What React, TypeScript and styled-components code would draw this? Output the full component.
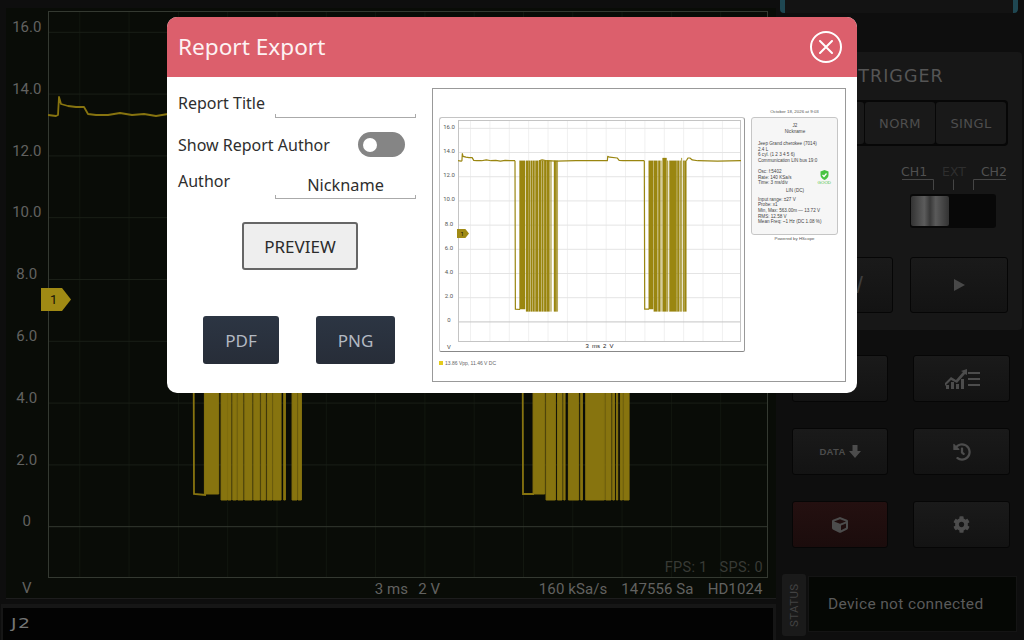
import React from "react";
import styled, { createGlobalStyle } from "styled-components";
import { FaCube, FaHistory, FaCog } from "react-icons/fa";

const GlobalStyle = createGlobalStyle`
  html, body { margin: 0; padding: 0; background: #0d0d0d; }
  * { box-sizing: border-box; }
`;

const UI_FONT = `"Noto Sans", "Open Sans", sans-serif`;
const SCOPE_FONT = `Roboto, "Liberation Sans", sans-serif`;
const TECH_FONT = `"DejaVu Sans", "Liberation Sans", sans-serif`;
const TINY_FONT = `"Liberation Sans", sans-serif`;

const Page = styled.div`
  position: relative;
  width: 1024px;
  height: 640px;
  overflow: hidden;
  display: grid;
  grid-template-columns: 777px 247px;
  background: #0e0e0e;
`;
const LeftColumn = styled.div`
  display: flex;
  flex-direction: column;
  padding: 8px 1px 0 6px;
`;
const ScopePanel = styled.div`
  position: relative;
  height: 591px;
  padding-top: 3px;
  background: #090c07;
  border-bottom: 1px solid #1d1d1d;
  display: grid;
  grid-template-columns: 41.5px 720px;
  grid-template-rows: 567px 1fr;
`;
const YAxis = styled.div<{ $pad: number; $gap: number; $line: number; $size: number; $color: string }>`
  display: flex;
  flex-direction: column;
  align-items: center;
  padding-top: ${(p) => p.$pad}px;
  gap: ${(p) => p.$gap}px;
  font-family: ${SCOPE_FONT};
  font-size: ${(p) => p.$size}px;
  line-height: ${(p) => p.$line}px;
  color: ${(p) => p.$color};
`;
const AxisUnit = styled.div<{ $size: number; $color: string }>`
  text-align: center;
  align-self: center;
  font-family: ${SCOPE_FONT};
  font-size: ${(p) => p.$size}px;
  color: ${(p) => p.$color};
`;
const ScopeFooter = styled.div`
  display: grid;
  grid-template-columns: 1fr auto 1fr;
  align-items: center;
  padding: 1px 5px 0 0;
  font-family: ${SCOPE_FONT};
  font-size: 15px;
  color: #626260;
  letter-spacing: 0.1px;
`;
const FooterCenter = styled.div`
  grid-column: 2;
  display: flex;
  gap: 10px;
  margin-left: 5px;
`;
const FooterRight = styled.div`
  display: flex;
  justify-content: flex-end;
  gap: 14px;
`;
const FpsOverlay = styled.div`
  position: absolute;
  right: 13px;
  top: 551px;
  display: flex;
  gap: 12px;
  font-family: ${SCOPE_FONT};
  font-size: 14.5px;
  color: #383a35;
  letter-spacing: 0.3px;
`;
const Marker = styled.div<{ $w: number; $h: number; $size: number }>`
  position: absolute;
  width: ${(p) => p.$w}px;
  height: ${(p) => p.$h}px;
  background: #a08a14;
  clip-path: polygon(0 0, 70% 0, 100% 50%, 70% 100%, 0 100%);
  font-family: ${SCOPE_FONT};
  font-size: ${(p) => p.$size}px;
  line-height: ${(p) => p.$h}px;
  padding-left: ${(p) => p.$w * 0.3}px;
  color: #14120a;
`;
const MainMarker = styled(Marker)`
  left: 35px;
  top: 280px;
`;
const PreviewMarker = styled(Marker)`
  left: 17px;
  top: 111px;
`;
const NameBar = styled.div`
  margin-top: 5px;
  margin-left: -5px;
  height: 36px;
  background: #161616;
  padding: 4px 3px 0 2px;
`;
const NameField = styled.div`
  height: 32px;
  background: #030303;
  padding-left: 8px;
  font-family: ${TECH_FONT};
  font-size: 14px;
  line-height: 30px;
  letter-spacing: 1px;
  color: #757575;
`;
const NameText = styled.span`
  display: inline-block;
  transform: scaleX(1.35);
  transform-origin: left center;
`;

const RightColumn = styled.div`
  display: flex;
  flex-direction: column;
`;
const TopStrip = styled.div`
  height: 13px;
  margin: 0 6px 0 3px;
  padding: 0 5px;
  background: #1f4752;
  border-radius: 0 0 4px 4px;
`;
const TopStripInner = styled.div`
  height: 100%;
  background: #131313;
`;
const TriggerPanel = styled.div`
  margin: 39px 2px 0 0;
  height: 278px;
  padding: 0 14px 0 17px;
  background: #171717;
  border-radius: 4px;
  display: flex;
  flex-direction: column;
`;
const TriggerTitle = styled.div`
  height: 48px;
  text-align: center;
  font-family: ${TECH_FONT};
  font-size: 17.5px;
  line-height: 48px;
  letter-spacing: 1px;
  color: #555;
`;
const ModeGroup = styled.div`
  display: grid;
  grid-template-columns: repeat(3, 71px);
  height: 46px;
  background: #070707;
  border-radius: 4px;
  padding: 2px 0;
`;
const ModeButton = styled.div`
  display: flex;
  align-items: center;
  justify-content: center;
  margin-right: 1px;
  background: #191919;
  border-radius: 3px;
  font-family: ${TECH_FONT};
  font-size: 13px;
  letter-spacing: 0.4px;
  color: #4e4e4e;
`;
const SwitchBlock = styled.div`
  align-self: flex-end;
  width: 107px;
  margin-top: 18px;
  display: flex;
  flex-direction: column;
`;
const ChannelLabels = styled.div`
  display: flex;
  justify-content: space-between;
  padding-right: 1px;
  height: 15px;
  font-family: ${TECH_FONT};
  font-size: 12.5px;
  line-height: 15px;
`;
const ChannelLabel = styled.span<{ $dim?: boolean }>`
  color: ${(p) => (p.$dim ? "#2e2e2e" : "#505050")};
`;
const Trough = styled.div`
  width: 86px;
  height: 34px;
  margin: 4px 0 0 9px;
  background: #080808;
  border-radius: 3px;
  padding: 2px 1px;
`;
const Thumb = styled.div`
  width: 38px;
  height: 30px;
  border-radius: 2px;
  background: linear-gradient(90deg, #333, #5c5c5c 35%, #383838 50%, #5a5a5a 65%, #333);
`;
const BigRow = styled.div`
  display: grid;
  grid-template-columns: 99px 98px;
  gap: 17px;
  margin-top: 29px;
`;
const BigButton = styled.div`
  height: 56px;
  display: flex;
  align-items: center;
  justify-content: center;
  background: linear-gradient(180deg, #1a1a1a, #131313);
  border: 1px solid #060606;
  border-radius: 3px;
`;
const SlashMark = styled.span`
  font-family: ${TINY_FONT};
  font-size: 24px;
  color: #3e3e3e;
  margin-left: 32px;
`;
const ActionGrid = styled.div`
  display: grid;
  grid-template-columns: 96px 97px;
  grid-auto-rows: 47px;
  column-gap: 25px;
  row-gap: 26px;
  margin: 25px 0 0 15px;
`;
const ActionButton = styled.div<{ $danger?: boolean }>`
  display: flex;
  align-items: center;
  justify-content: center;
  gap: 3px;
  background: ${(p) =>
    p.$danger ? "linear-gradient(180deg, #241010, #1b0c0c)" : "linear-gradient(180deg, #1a1a1a, #131313)"};
  border: 1px solid #060606;
  border-radius: 3px;
  color: #4c4c4c;
  font-family: ${TINY_FONT};
  font-weight: 700;
  font-size: 9.5px;
  letter-spacing: 0.3px;
`;
const StatusRow = styled.div`
  display: flex;
  gap: 2px;
  margin: 26px 0 0 5px;
`;
const StatusTag = styled.div`
  width: 24px;
  height: 62px;
  background: #1a1a1a;
  border-radius: 3px;
  display: flex;
  align-items: center;
  justify-content: center;
  writing-mode: vertical-rl;
  transform: rotate(180deg);
  font-family: ${SCOPE_FONT};
  font-size: 11.5px;
  letter-spacing: 0.4px;
  color: #424242;
`;
const StatusBox = styled.div`
  width: 209px;
  height: 56px;
  margin-top: 2px;
  background: #050704;
  border: 1px solid #141414;
  display: flex;
  align-items: center;
  padding-left: 19px;
  font-family: ${SCOPE_FONT};
  font-size: 15.5px;
  letter-spacing: 0.35px;
  color: #5a5a5a;
`;

/* Modal */
const Modal = styled.div`
  position: absolute;
  left: 167px;
  top: 17px;
  width: 690px;
  height: 376px;
  background: #fff;
  border-radius: 10px;
  overflow: hidden;
  display: flex;
  flex-direction: column;
  font-family: ${UI_FONT};
`;
const ModalHeader = styled.div`
  height: 60px;
  flex: none;
  background: #dc5f6c;
  display: flex;
  align-items: center;
  justify-content: space-between;
  padding: 0 15px 0 11px;
`;
const ModalTitle = styled.div`
  font-size: 22.6px;
  margin-top: -2px;
  color: #fdf2f3;
`;
const CloseButton = styled.div`
  width: 32px;
  height: 32px;
  border: 2px solid #fff;
  border-radius: 50%;
  display: flex;
  align-items: center;
  justify-content: center;
`;
const ModalBody = styled.div`
  flex: 1;
  display: grid;
  grid-template-columns: 265px 414px;
  padding-top: 11px;
`;
const Form = styled.div`
  display: flex;
  flex-direction: column;
  padding: 5px 0 0 11px;
`;
const FieldRow = styled.div<{ $h: number; $mt?: number }>`
  display: grid;
  grid-template-columns: 97px 141px;
  height: ${(p) => p.$h}px;
  margin-top: ${(p) => p.$mt ?? 0}px;
`;
const FieldLabel = styled.div`
  font-size: 16px;
  line-height: 20px;
  color: #2e2e2e;
  white-space: nowrap;
`;
const FieldInput = styled.div`
  position: relative;
  border-bottom: 1px solid #aaa;
  text-align: center;
  font-size: 16.3px;
  line-height: 20px;
  color: #2e2e2e;
  display: flex;
  align-items: flex-end;
  justify-content: center;
  padding-bottom: 3px;
  &::before,
  &::after {
    content: "";
    position: absolute;
    bottom: 0;
    width: 1px;
    height: 3px;
    background: #aaa;
  }
  &::before { left: 0; }
  &::after { right: 0; }
`;
const ToggleRow = styled.div`
  display: flex;
  align-items: center;
  justify-content: space-between;
  width: 227px;
  height: 25px;
  margin-top: 14px;
`;
const Toggle = styled.div`
  width: 47px;
  height: 25px;
  border-radius: 13px;
  background: #858585;
  display: flex;
  align-items: center;
  padding-left: 5px;
`;
const ToggleKnob = styled.div`
  width: 14px;
  height: 14px;
  border-radius: 50%;
  background: #fff;
`;
const PreviewButton = styled.div`
  width: 116px;
  height: 48px;
  margin: 23px 0 0 64px;
  background: #eeeeee;
  border: 2px solid #666;
  border-radius: 3px;
  display: flex;
  align-items: center;
  justify-content: center;
  font-size: 17px;
  color: #2b2b2b;
`;
const ExportRow = styled.div`
  display: flex;
  gap: 37px;
  margin: 46px 0 0 25px;
`;
const ExportButton = styled.div<{ $w: number }>`
  width: ${(p) => p.$w}px;
  height: 48px;
  background: linear-gradient(180deg, #2c3543, #272d38);
  border-radius: 3px;
  display: flex;
  align-items: center;
  justify-content: center;
  font-size: 17px;
  color: #b3b9c2;
`;

/* Preview */
const PreviewFrame = styled.div`
  height: 294px;
  border: 1.5px solid #999;
  border-right-width: 1px;
  display: grid;
  grid-template-columns: 306px 87px;
  column-gap: 6px;
  padding: 21px 0 0 6px;
  font-family: ${TINY_FONT};
`;
const PreviewLeft = styled.div`
  grid-row: 1;
  padding-top: 7px;
`;
const ChartCard = styled.div`
  position: relative;
  height: 235px;
  border: 1px solid #c4c4c4;
  border-right-color: #999;
  border-bottom: 1.5px solid #888;
  border-radius: 3px 3px 2px 2px;
  display: grid;
  grid-template-columns: 18px 283px;
  grid-template-rows: 222px 1fr;
  padding-top: 2px;
`;
const PreviewFooter = styled.div`
  text-align: center;
  font-size: 6px;
  color: #222;
  line-height: 9px;
  word-spacing: 1.5px;
`;
const Legend = styled.div`
  display: flex;
  align-items: center;
  gap: 2px;
  margin-top: 8px;
  font-size: 5px;
  color: #666;
`;
const LegendSwatch = styled.span`
  width: 4px;
  height: 4px;
  background: #e4cb1c;
`;
const PreviewSide = styled.div`
  display: flex;
  flex-direction: column;
  align-items: stretch;
  margin-top: -2px;
`;
const TinyCenter = styled.div`
  text-align: center;
  font-size: 4.4px;
  line-height: 7px;
  color: #555;
`;
const SideCard = styled.div`
  margin-top: 2px;
  height: 118px;
  background: #f6f6f6;
  border: 1px solid #c6c6c6;
  border-radius: 3px;
  padding: 5px 5px 0 6px;
  font-size: 4.6px;
  line-height: 5.7px;
  color: #444;
  white-space: nowrap;
`;
const SideHead = styled.div`
  text-align: center;
  margin-bottom: 6px;
  line-height: 6px;
`;
const SideBlock = styled.div<{ $mb: number }>`
  margin-bottom: ${(p) => p.$mb}px;
`;
const OscRow = styled.div`
  display: flex;
  justify-content: space-between;
  align-items: center;
  padding-right: 1px;
`;
const GoodBadge = styled.div`
  display: flex;
  flex-direction: column;
  align-items: center;
  color: #49c342;
  font-size: 4.4px;
  line-height: 5px;
`;
const SideTitle = styled.div`
  text-align: center;
  margin: 2px 0 3px;
`;

const px = (zoom: number, base: number) => base + zoom / 3 - 47.6;
const burstOne = [
  [612, 655], [662, 680], [682, 692], [697, 708], [712, 728], [733, 755], [760, 778],
  [782, 795], [800, 815], [818, 842], [850, 855], [875, 890], [893, 903],
].map(([a, b]) => [px(a, 0), px(b, 0)]);
const burstTwo = [
  [398, 433], [437, 465], [471, 485], [490, 494], [504, 535], [541, 546], [556, 612],
  [616, 632], [637, 642], [648, 652], [660, 666], [670, 686],
].map(([a, b]) => [px(a, 400), px(b, 400)]);

const tracePath =
  "M0 104 L8 105 L10 104 L11 86 L13 93 L20 95 L28 96 L36 96 L40 103 L48 104 L60 104 L72 102 L84 104 L96 103 L108 105 L120 103 L134 104 L145 104 " +
  "M206 104 L214 102 L226 104 L250 105 L300 104 L345 104 L380 104 L381 93 L386 95 L405 97 L410 103 L420 104 L474 104 " +
  "M581 104 L585 97 L590 97 L596 102 L610 104 L660 105 L720 104";

type PlotProps = {
  width: number;
  height: number;
  vLine: string;
  hLine: string;
  axis: string;
  trace: string;
  traceWidth: number;
  barStroke: number;
};

const ScopePlot = ({ width, height, vLine, hLine, axis, trace, traceWidth, barStroke }: PlotProps) => {
  const verticals = Array.from({ length: 14 }, (_, i) => 31.8 + i * 49.3);
  const horizontals = [0, 1, 2, 3, 4, 5, 6, 7, 8].map((i) => 515.7 - i * 61.8);
  return (
    <svg width={width} height={height} viewBox="0 0 720 567" preserveAspectRatio="none" style={{ display: "block" }}>
      {verticals.map((x) => (
        <line key={x} x1={x} x2={x} y1={0} y2={567} stroke={vLine} strokeWidth={1} vectorEffect="non-scaling-stroke" />
      ))}
      {horizontals.map((y, i) => (
        <line
          key={y}
          x1={0}
          x2={720}
          y1={y}
          y2={y}
          stroke={i === 0 ? axis : hLine}
          strokeWidth={1}
          vectorEffect="non-scaling-stroke"
        />
      ))}
      <rect x={0} y={0} width={720} height={567} fill="none" stroke={axis} strokeWidth={2} vectorEffect="non-scaling-stroke" />
      {burstOne.map(([a, b], i) => (
        <rect
          key={a}
          x={a}
          y={104}
          width={b - a}
          height={i < 1 ? 379 : 385}
          fill={trace}
          stroke={trace}
          strokeWidth={barStroke}
          vectorEffect="non-scaling-stroke"
        />
      ))}
      {burstTwo.map(([a, b], i) => (
        <rect
          key={a}
          x={a}
          y={i % 5 === 4 ? 97 : 104}
          width={b - a}
          height={(i % 5 === 4 ? 392 : 385) - (i < 1 ? 6 : 0)}
          fill={trace}
          stroke={trace}
          strokeWidth={barStroke}
          vectorEffect="non-scaling-stroke"
        />
      ))}
      <path
        d="M145 104 L146 483 L158 484 M474 104 L475 483 L486 483"
        fill="none"
        stroke={trace}
        strokeWidth={traceWidth}
        vectorEffect="non-scaling-stroke"
      />
      <path d={tracePath} fill="none" stroke={trace} strokeWidth={traceWidth} strokeLinejoin="round" vectorEffect="non-scaling-stroke" />
    </svg>
  );
};

const yLabels = ["16.0", "14.0", "12.0", "10.0", "8.0", "6.0", "4.0", "2.0", "0"];

const ChartListIcon = () => (
  <svg width="36" height="20" viewBox="0 0 36 20" fill="#4c4c4c">
    <path d="M1 17 L1 14 L7 8 L12 11 L19 3 L17 2 L23 0 L23 6 L21 5 L13 14 L7 11 L2 16 Z" />
    <rect x="2" y="16" width="3" height="4" />
    <rect x="7" y="13" width="3" height="7" />
    <rect x="12" y="15" width="3" height="5" />
    <rect x="17" y="10" width="3" height="10" />
    <rect x="24" y="3" width="12" height="2" />
    <rect x="24" y="9" width="12" height="2" />
    <rect x="24" y="15" width="12" height="2" />
  </svg>
);

const DataArrowIcon = () => (
  <svg width="12" height="13" viewBox="0 0 12 13" fill="#4c4c4c">
    <path d="M3.5 0 H8.5 V6 H12 L6 13 L0 6 H3.5 Z" />
  </svg>
);

const ChannelBrackets = () => (
  <svg width="107" height="11" viewBox="0 0 107 11" style={{ display: "block" }}>
    <path d="M1 .5 H32.5 V11 M52.5 .5 V11 M105 .5 H72.5 V11" fill="none" stroke="#454545" strokeWidth="1" />
  </svg>
);

const ShieldIcon = () => (
  <svg width="9" height="10" viewBox="0 0 18 20">
    <path d="M9 0 L17 3 V10 C17 15 13 18 9 20 C5 18 1 15 1 10 V3 Z" fill="#49c342" />
    <path d="M5 10 L8 13 L13 7" fill="none" stroke="#fff" strokeWidth="2.4" />
  </svg>
);

export default function App() {
  return (
    <Page>
      <GlobalStyle />
      <LeftColumn>
        <ScopePanel>
          <YAxis $pad={7} $gap={43.8} $line={18} $size={15} $color="#626260">
            {yLabels.map((l) => (
              <div key={l}>{l}</div>
            ))}
          </YAxis>
          <ScopePlot width={720} height={567} vLine="#12170f" hLine="#1a1f17" axis="#343931" trace="#87740f" traceWidth={1.8} barStroke={1} />
          <AxisUnit $size={15} $color="#626260">V</AxisUnit>
          <ScopeFooter>
            <FooterCenter>
              <span>3 ms</span>
              <span>2 V</span>
            </FooterCenter>
            <FooterRight>
              <span>160 kSa/s</span>
              <span>147556 Sa</span>
              <span>HD1024</span>
            </FooterRight>
          </ScopeFooter>
          <FpsOverlay>
            <span>FPS: 1</span>
            <span>SPS: 0</span>
          </FpsOverlay>
          <MainMarker $w={30} $h={23} $size={13}>1</MainMarker>
        </ScopePanel>
        <NameBar>
          <NameField>
            <NameText>J2</NameText>
          </NameField>
        </NameBar>
      </LeftColumn>

      <RightColumn>
        <TopStrip>
          <TopStripInner />
        </TopStrip>
        <TriggerPanel>
          <TriggerTitle>TRIGGER</TriggerTitle>
          <ModeGroup>
            <ModeButton>AUTO</ModeButton>
            <ModeButton>NORM</ModeButton>
            <ModeButton>SINGL</ModeButton>
          </ModeGroup>
          <SwitchBlock>
            <ChannelLabels>
              <ChannelLabel>CH1</ChannelLabel>
              <ChannelLabel $dim>EXT</ChannelLabel>
              <ChannelLabel>CH2</ChannelLabel>
            </ChannelLabels>
            <ChannelBrackets />
            <Trough>
              <Thumb />
            </Trough>
          </SwitchBlock>
          <BigRow>
            <BigButton>
              <SlashMark>/</SlashMark>
            </BigButton>
            <BigButton>
              <svg width="11" height="12" viewBox="0 0 11 12">
                <path d="M0 0 L11 6 L0 12 Z" fill="#484848" />
              </svg>
            </BigButton>
          </BigRow>
        </TriggerPanel>
        <ActionGrid>
          <ActionButton />
          <ActionButton>
            <ChartListIcon />
          </ActionButton>
          <ActionButton>
            DATA <DataArrowIcon />
          </ActionButton>
          <ActionButton>
            <FaHistory size={18} />
          </ActionButton>
          <ActionButton $danger>
            <FaCube size={16} />
          </ActionButton>
          <ActionButton>
            <FaCog size={17} />
          </ActionButton>
        </ActionGrid>
        <StatusRow>
          <StatusTag>STATUS</StatusTag>
          <StatusBox>Device not connected</StatusBox>
        </StatusRow>
      </RightColumn>

      <Modal>
        <ModalHeader>
          <ModalTitle>Report Export</ModalTitle>
          <CloseButton>
            <svg width="14" height="14" viewBox="0 0 14 14">
              <path d="M1 1 L13 13 M13 1 L1 13" stroke="#fff" strokeWidth="2" strokeLinecap="round" />
            </svg>
          </CloseButton>
        </ModalHeader>
        <ModalBody>
          <Form>
            <FieldRow $h={25}>
              <FieldLabel>Report Title</FieldLabel>
              <FieldInput />
            </FieldRow>
            <ToggleRow>
              <FieldLabel>Show Report Author</FieldLabel>
              <Toggle>
                <ToggleKnob />
              </Toggle>
            </ToggleRow>
            <FieldRow $h={28} $mt={14}>
              <FieldLabel>Author</FieldLabel>
              <FieldInput>Nickname</FieldInput>
            </FieldRow>
            <PreviewButton>PREVIEW</PreviewButton>
            <ExportRow>
              <ExportButton $w={76}>PDF</ExportButton>
              <ExportButton $w={79}>PNG</ExportButton>
            </ExportRow>
          </Form>
          <PreviewFrame>
            <PreviewLeft>
              <ChartCard>
                <YAxis $pad={3} $gap={16.15} $line={8} $size={6} $color="#555">
                  {yLabels.map((l) => (
                    <div key={l}>{l}</div>
                  ))}
                </YAxis>
                <ScopePlot width={283} height={222} vLine="#f0f0f0" hLine="#e4e4e4" axis="#c4c4c4" trace="#9a8610" traceWidth={1.2} barStroke={0.25} />
                <AxisUnit $size={6} $color="#444">V</AxisUnit>
                <PreviewFooter>3 ms 2 V</PreviewFooter>
                <PreviewMarker $w={12} $h={9} $size={6}>1</PreviewMarker>
              </ChartCard>
              <Legend>
                <LegendSwatch />
                <span>13.86 Vpp, 11.46 V DC</span>
              </Legend>
            </PreviewLeft>
            <PreviewSide>
              <TinyCenter>October 18, 2026 at 9:03</TinyCenter>
              <SideCard>
                <SideHead>
                  J2
                  <br />
                  Nickname
                </SideHead>
                <SideBlock $mb={5}>
                  Jeep Grand cherokee (7014)
                  <br />
                  2.4 L
                  <br />
                  6 cyl. (1 2 3 4 5 6)
                  <br />
                  Communication LIN bus 19:0
                </SideBlock>
                <OscRow>
                  <div>
                    Osc: f:5402
                    <br />
                    Rate: 140 KSa/s
                    <br />
                    Time: 3 ms/div
                  </div>
                  <GoodBadge>
                    <ShieldIcon />
                    GOOD
                  </GoodBadge>
                </OscRow>
                <SideTitle>LIN (DC)</SideTitle>
                <div>
                  Input range: ±27 V
                  <br />
                  Probe: x1
                  <br />
                  Min, Max: 563.00m — 13.72 V
                  <br />
                  RMS: 12.58 V
                  <br />
                  Mean Freq: ~1 Hz (DC 1.08 %)
                </div>
              </SideCard>
              <TinyCenter>Powered by HScope</TinyCenter>
            </PreviewSide>
          </PreviewFrame>
        </ModalBody>
      </Modal>
    </Page>
  );
}
